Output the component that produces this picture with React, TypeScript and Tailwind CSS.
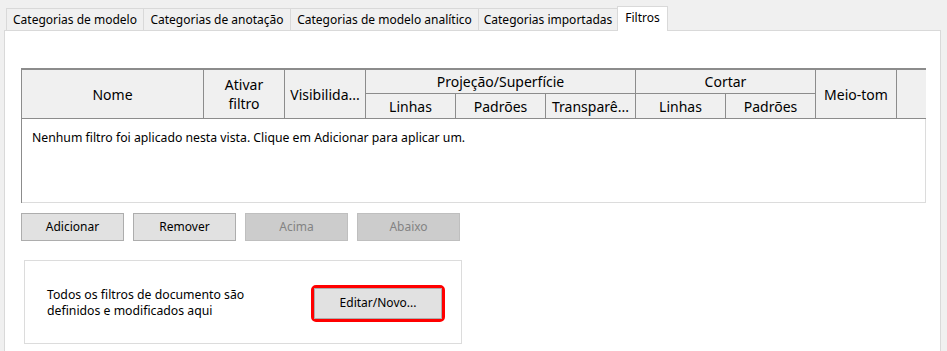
import React from 'react';

const tabs = [
  { name: 'Categorias de modelo', w: 137 },
  { name: 'Categorias de anotação', w: 147 },
  { name: 'Categorias de modelo analítico', w: 188 },
  { name: 'Categorias importadas', w: 139 },
];

const font = { fontFamily: '"Noto Sans", "Open Sans", Arial, sans-serif' };

function HeaderCell({ children, className = '' }: { children?: React.ReactNode; className?: string }) {
  return (
    <div className={`flex items-center justify-center border-r border-b border-[#8c8c8c] bg-[#f0f0f0] text-[14px] leading-[19px] text-black text-center whitespace-nowrap overflow-hidden ${className}`}>
      {children}
    </div>
  );
}

function Btn({ label, disabled = false }: { label: string; disabled?: boolean }) {
  return (
    <button
      className={`w-[103px] h-[28px] border text-[12px] ${
        disabled ? 'bg-[#cccccc] border-[#bfbfbf] text-[#838383]' : 'bg-[#e1e1e1] border-[#adadad] text-black'
      }`}
    >
      {label}
    </button>
  );
}

export default function App() {
  return (
    <div className="w-[947px] h-[351px] overflow-hidden bg-[#f0f0f0]" style={font}>
      {/* Tabs */}
      <div className="flex items-end h-[30px] pl-[6px]">
        {tabs.map((t) => (
          <div
            key={t.name}
            className="h-[22px] border-t border-l border-[#d9d9d9] bg-[#f0f0f0] flex items-center justify-center text-[12px] text-black"
            style={{ width: t.w }}
          >
            {t.name}
          </div>
        ))}
        <div className="relative z-10 -mb-px h-[25px] w-[51px] border-t border-l border-r border-[#d9d9d9] bg-white flex items-start justify-center pt-[2px] text-[12px] text-black">
          Filtros
        </div>
      </div>

      {/* Panel */}
      <div className="ml-[4px] w-[937px] h-[330px] border border-[#d9d9d9] bg-white pl-[16px] pt-[37px]">
        {/* Table */}
        <div className="w-[905px] border-t-2 border-l border-[#8c8c8c]">
          <div className="grid grid-cols-[182px_81px_81px_90px_90px_90px_90px_90px_81px_1fr] grid-rows-[24px_25px]">
            <HeaderCell className="row-span-2">Nome</HeaderCell>
            <HeaderCell className="row-span-2">
              <span>
                Ativar
                <br />
                filtro
              </span>
            </HeaderCell>
            <HeaderCell className="row-span-2">Visibilida...</HeaderCell>
            <HeaderCell className="col-span-3">Projeção/Superfície</HeaderCell>
            <HeaderCell className="col-span-2">Cortar</HeaderCell>
            <HeaderCell className="row-span-2">Meio-tom</HeaderCell>
            <HeaderCell className="row-span-2 border-r-0" />
            <HeaderCell>Linhas</HeaderCell>
            <HeaderCell>Padrões</HeaderCell>
            <HeaderCell>Transparê...</HeaderCell>
            <HeaderCell>Linhas</HeaderCell>
            <HeaderCell>Padrões</HeaderCell>
          </div>
          <div className="h-[84px] border-r border-b border-[#dcdcdc] pl-[10px] pt-[10px] text-[12.25px] text-black">
            Nenhum filtro foi aplicado nesta vista. Clique em Adicionar para aplicar um.
          </div>
        </div>

        {/* Buttons */}
        <div className="flex gap-[9px] mt-[10px]">
          <Btn label="Adicionar" />
          <Btn label="Remover" />
          <Btn label="Acima" disabled />
          <Btn label="Abaixo" disabled />
        </div>

        {/* Group */}
        <div className="ml-[3px] mt-[19px] w-[438px] h-[84px] border border-[#dcdcdc] flex items-center pl-[22px] pr-[16px]">
          <div className="w-[250px] text-[12.25px] leading-[16px] text-black pt-[2px]">
            Todos os filtros de documento são
            <br />
            definidos e modificados aqui
          </div>
          <div className="ml-auto mt-[2px] rounded-[5px] border-[3px] border-[#ff0000]">
            <button className="block w-[128px] h-[31px] bg-[#e1e1e1] border border-[#adadad] text-[12px] text-black">
              Editar/Novo...
            </button>
          </div>
        </div>
      </div>
    </div>
  );
}
